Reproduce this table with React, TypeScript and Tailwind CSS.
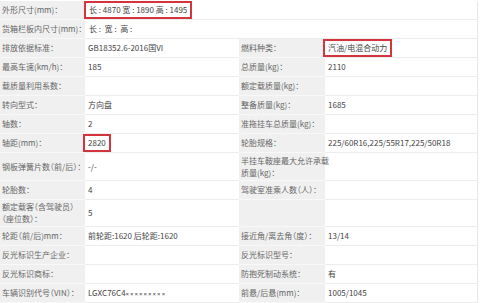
import React from "react";

type Cell = { label: React.ReactNode; value?: React.ReactNode };
type Row = { h: number; cells: Cell[] };

const Boxed = ({ children }: { children: React.ReactNode }) => (
  <span className="-mx-[2px] px-[2px] outline-2 outline-[#d4343d] outline-offset-[1px]">{children}</span>
);

const rows: Row[] = [
  { h: 19, cells: [{ label: "排放依据标准：", value: "GB18352.6-2016国VI" }, { label: "燃料种类：", value: <Boxed>汽油/电混合动力</Boxed> }] },
  { h: 19, cells: [{ label: "最高车速(km/h)：", value: "185" }, { label: "总质量(kg)：", value: "2110" }] },
  { h: 19, cells: [{ label: "载质量利用系数：" }, { label: "额定载质量(kg)：" }] },
  { h: 19, cells: [{ label: "转向型式：", value: "方向盘" }, { label: "整备质量(kg)：", value: "1685" }] },
  { h: 19, cells: [{ label: "轴数：", value: "2" }, { label: "准拖挂车总质量(kg)：" }] },
  { h: 19, cells: [{ label: "轴距(mm)：", value: <Boxed>2820</Boxed> }, { label: "轮胎规格：", value: "225/60R16,225/55R17,225/50R18" }] },
  { h: 28, cells: [{ label: "钢板弹簧片数（前/后）：", value: "-/-" }, { label: <>半挂车鞍座最大允许承载<br />质量(kg)：</> }] },
  { h: 19, cells: [{ label: "轮胎数：", value: "4" }, { label: "驾驶室准乘人数（人）：" }] },
  { h: 27, cells: [{ label: <>额定载客（含驾驶员）<br />（座位数）：</>, value: "5" }, { label: "" }] },
  { h: 19, cells: [{ label: "轮距（前/后)mm：", value: "前轮距:1620 后轮距:1620" }, { label: "接近角/离去角（度）：", value: "13/14" }] },
  { h: 19, cells: [{ label: "反光标识生产企业：" }, { label: "反光标识型号：" }] },
  { h: 19, cells: [{ label: "反光标识商标：" }, { label: "防抱死制动系统：", value: "有" }] },
  {
    h: 19,
    cells: [
      {
        label: "车辆识别代号（VIN）：",
        value: (
          <span>
            LGXC76C4
            <span className="text-[6px] tracking-[1px]" style={{ fontFamily: '"Liberation Sans", sans-serif' }}>
              ×××××××××
            </span>
          </span>
        ),
      },
      { label: "前悬/后悬(mm)：", value: "1005/1045" },
    ],
  },
];

export default function App() {
  return (
    <div
      className="w-[480px] h-[303px] overflow-hidden bg-white pt-px text-[8px] leading-[12px]"
      style={{ fontFamily: '"Noto Sans CJK SC", "Liberation Sans", sans-serif' }}
    >
      <div className="grid w-[478px] grid-cols-[85px_154px_86px_153px] border-r border-[#e6e6e6]">
        <div className="flex h-[19px] items-center border-b border-[#f8f8f8] bg-[#f0f0f0] pl-[2px] text-[#666] whitespace-nowrap [font-feature-settings:'halt']">外形尺寸(mm)：</div>
        <div className="col-span-3 flex h-[19px] items-center border-b border-[#ececec] pl-[4px] text-[#444]">
          <Boxed>长 : 4870 宽 : 1890 高 : 1495</Boxed>
        </div>
        <div className="flex h-[19px] items-center border-b border-[#f8f8f8] bg-[#f0f0f0] pl-[2px] text-[#666] whitespace-nowrap [font-feature-settings:'halt']">货箱栏板内尺寸(mm)：</div>
        <div className="col-span-3 flex h-[19px] items-center border-b border-[#ececec] pl-[4px] text-[#444] whitespace-pre">长 :  宽 :  高 :</div>
        {rows.map((r, i) => (
          <React.Fragment key={i}>
            {r.cells.map((c, j) => (
              <React.Fragment key={j}>
                <div
                  className="flex items-center border-b border-[#f8f8f8] bg-[#f0f0f0] pl-[2px] text-[#666] whitespace-nowrap [font-feature-settings:'halt']"
                  style={{ height: r.h }}
                >
                  <span>{c.label}</span>
                </div>
                <div
                  className="flex items-center border-b border-[#ececec] pl-[3px] text-[#444] whitespace-nowrap"
                  style={{ height: r.h }}
                >
                  {c.value ?? ""}
                </div>
              </React.Fragment>
            ))}
          </React.Fragment>
        ))}
      </div>
    </div>
  );
}
